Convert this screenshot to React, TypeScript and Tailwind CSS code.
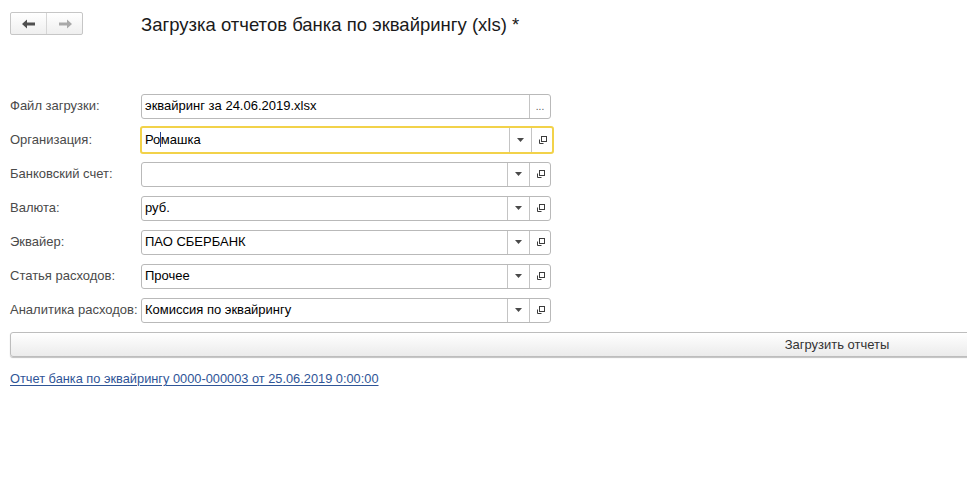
const labelCls = "w-[131px] shrink-0 text-[13px] text-[#4a4a4a]";

function OpenIcon() {
  return (
    <svg width="11" height="11" viewBox="0 0 11 11" fill="none" stroke="#3c3c3c" strokeWidth="1">
      <rect x="4.5" y="1.5" width="5" height="5" />
      <path d="M2.5 4.5 V8.5 H6.5" />
    </svg>
  );
}

function Caret() {
  return (
    <svg width="7" height="4" viewBox="0 0 7 4">
      <path d="M0 0 H7 L3.5 4 Z" fill="#4a4a4a" />
    </svg>
  );
}

function SelectField(props: { value: string; focused?: boolean; cursor?: boolean }) {
  const box = props.focused
    ? "border-2 border-[#f2d24a] -mx-[1px] w-[414px] h-[28px]"
    : "border border-[#b9b9b9] w-[410px] h-[25px]";
  return (
    <div className={"flex items-stretch rounded-[3px] bg-white " + box}>
      <div className="flex-1 flex items-center pl-[3px] text-[13px] text-black overflow-hidden whitespace-nowrap">
        {props.cursor ? (
          <span>
            Ро<span className="inline-block w-[1.5px] h-[15px] bg-[#1f3f8f] align-[-3px] -mx-[0.5px]" />машка
          </span>
        ) : (
          props.value
        )}
      </div>
      <div className="w-[22px] flex items-center justify-center border-l border-[#c4c4c4]">
        <Caret />
      </div>
      <div className="w-[21px] flex items-center justify-center border-l border-[#c4c4c4]">
        <OpenIcon />
      </div>
    </div>
  );
}

function Row(props: { label: string; children: React.ReactNode }) {
  return (
    <div className="flex items-center h-[34px]">
      <div className={labelCls}>{props.label}</div>
      {props.children}
    </div>
  );
}

export default function App() {
  return (
    <div
      className="w-[967px] h-[480px] bg-white overflow-hidden relative"
      style={{ fontFamily: '"Liberation Sans", Arial, sans-serif' }}
    >
      <div className="flex items-center pt-[12px] pl-[10px]">
        <div className="flex h-[23px] w-[73px] rounded-[2px] border border-[#c6c6c6] bg-gradient-to-b from-white to-[#efefef]">
          <div className="flex-1 flex items-center justify-center border-r border-[#d6d6d6]">
            <svg width="14" height="10" viewBox="0 0 14 10">
              <path d="M0 5 L5 0.5 V3.5 H13 V6.5 H5 V9.5 Z" fill="#4f4f4f" />
            </svg>
          </div>
          <div className="flex-1 flex items-center justify-center">
            <svg width="14" height="10" viewBox="0 0 14 10">
              <path d="M14 5 L9 0.5 V3.5 H1 V6.5 H9 V9.5 Z" fill="#a9a9a9" />
            </svg>
          </div>
        </div>
        <div className="ml-[58px] mt-[4px] text-[18.5px] text-[#1a1a1a] leading-none">
          Загрузка отчетов банка по эквайрингу (xls) *
        </div>
      </div>

      <div className="pl-[10px] mt-[54px]">
        <Row label="Файл загрузки:">
          <div className="flex items-stretch w-[410px] h-[25px] rounded-[3px] border border-[#b9b9b9] bg-white">
            <div className="flex-1 flex items-center pl-[3px] text-[13px] text-black whitespace-nowrap">
              эквайринг за 24.06.2019.xlsx
            </div>
            <div className="w-[21px] flex items-end justify-center pb-[6px] border-l border-[#c4c4c4] text-[10px] text-[#555] leading-none">
              ...
            </div>
          </div>
        </Row>
        <Row label="Организация:">
          <SelectField value="Ромашка" focused cursor />
        </Row>
        <Row label="Банковский счет:">
          <SelectField value="" />
        </Row>
        <Row label="Валюта:">
          <SelectField value="руб." />
        </Row>
        <Row label="Эквайер:">
          <SelectField value="ПАО СБЕРБАНК" />
        </Row>
        <Row label="Статья расходов:">
          <SelectField value="Прочее" />
        </Row>
        <Row label="Аналитика расходов:">
          <SelectField value="Комиссия по эквайрингу" />
        </Row>

        <div className="mt-[5px] w-[1654px] h-[25px] rounded-[3px] border border-[#bdbdbd] bg-gradient-to-b from-white to-[#ebebeb] shadow-[0_1px_1px_rgba(0,0,0,0.25)] flex items-center justify-center text-[13px] text-[#333]">
          Загрузить отчеты
        </div>

        <div className="mt-[12px] text-[12.8px] text-[#2f5597] underline underline-offset-2 decoration-[#2f5597]">
          Отчет банка по эквайрингу 0000-000003 от 25.06.2019 0:00:00
        </div>
      </div>
    </div>
  );
}
